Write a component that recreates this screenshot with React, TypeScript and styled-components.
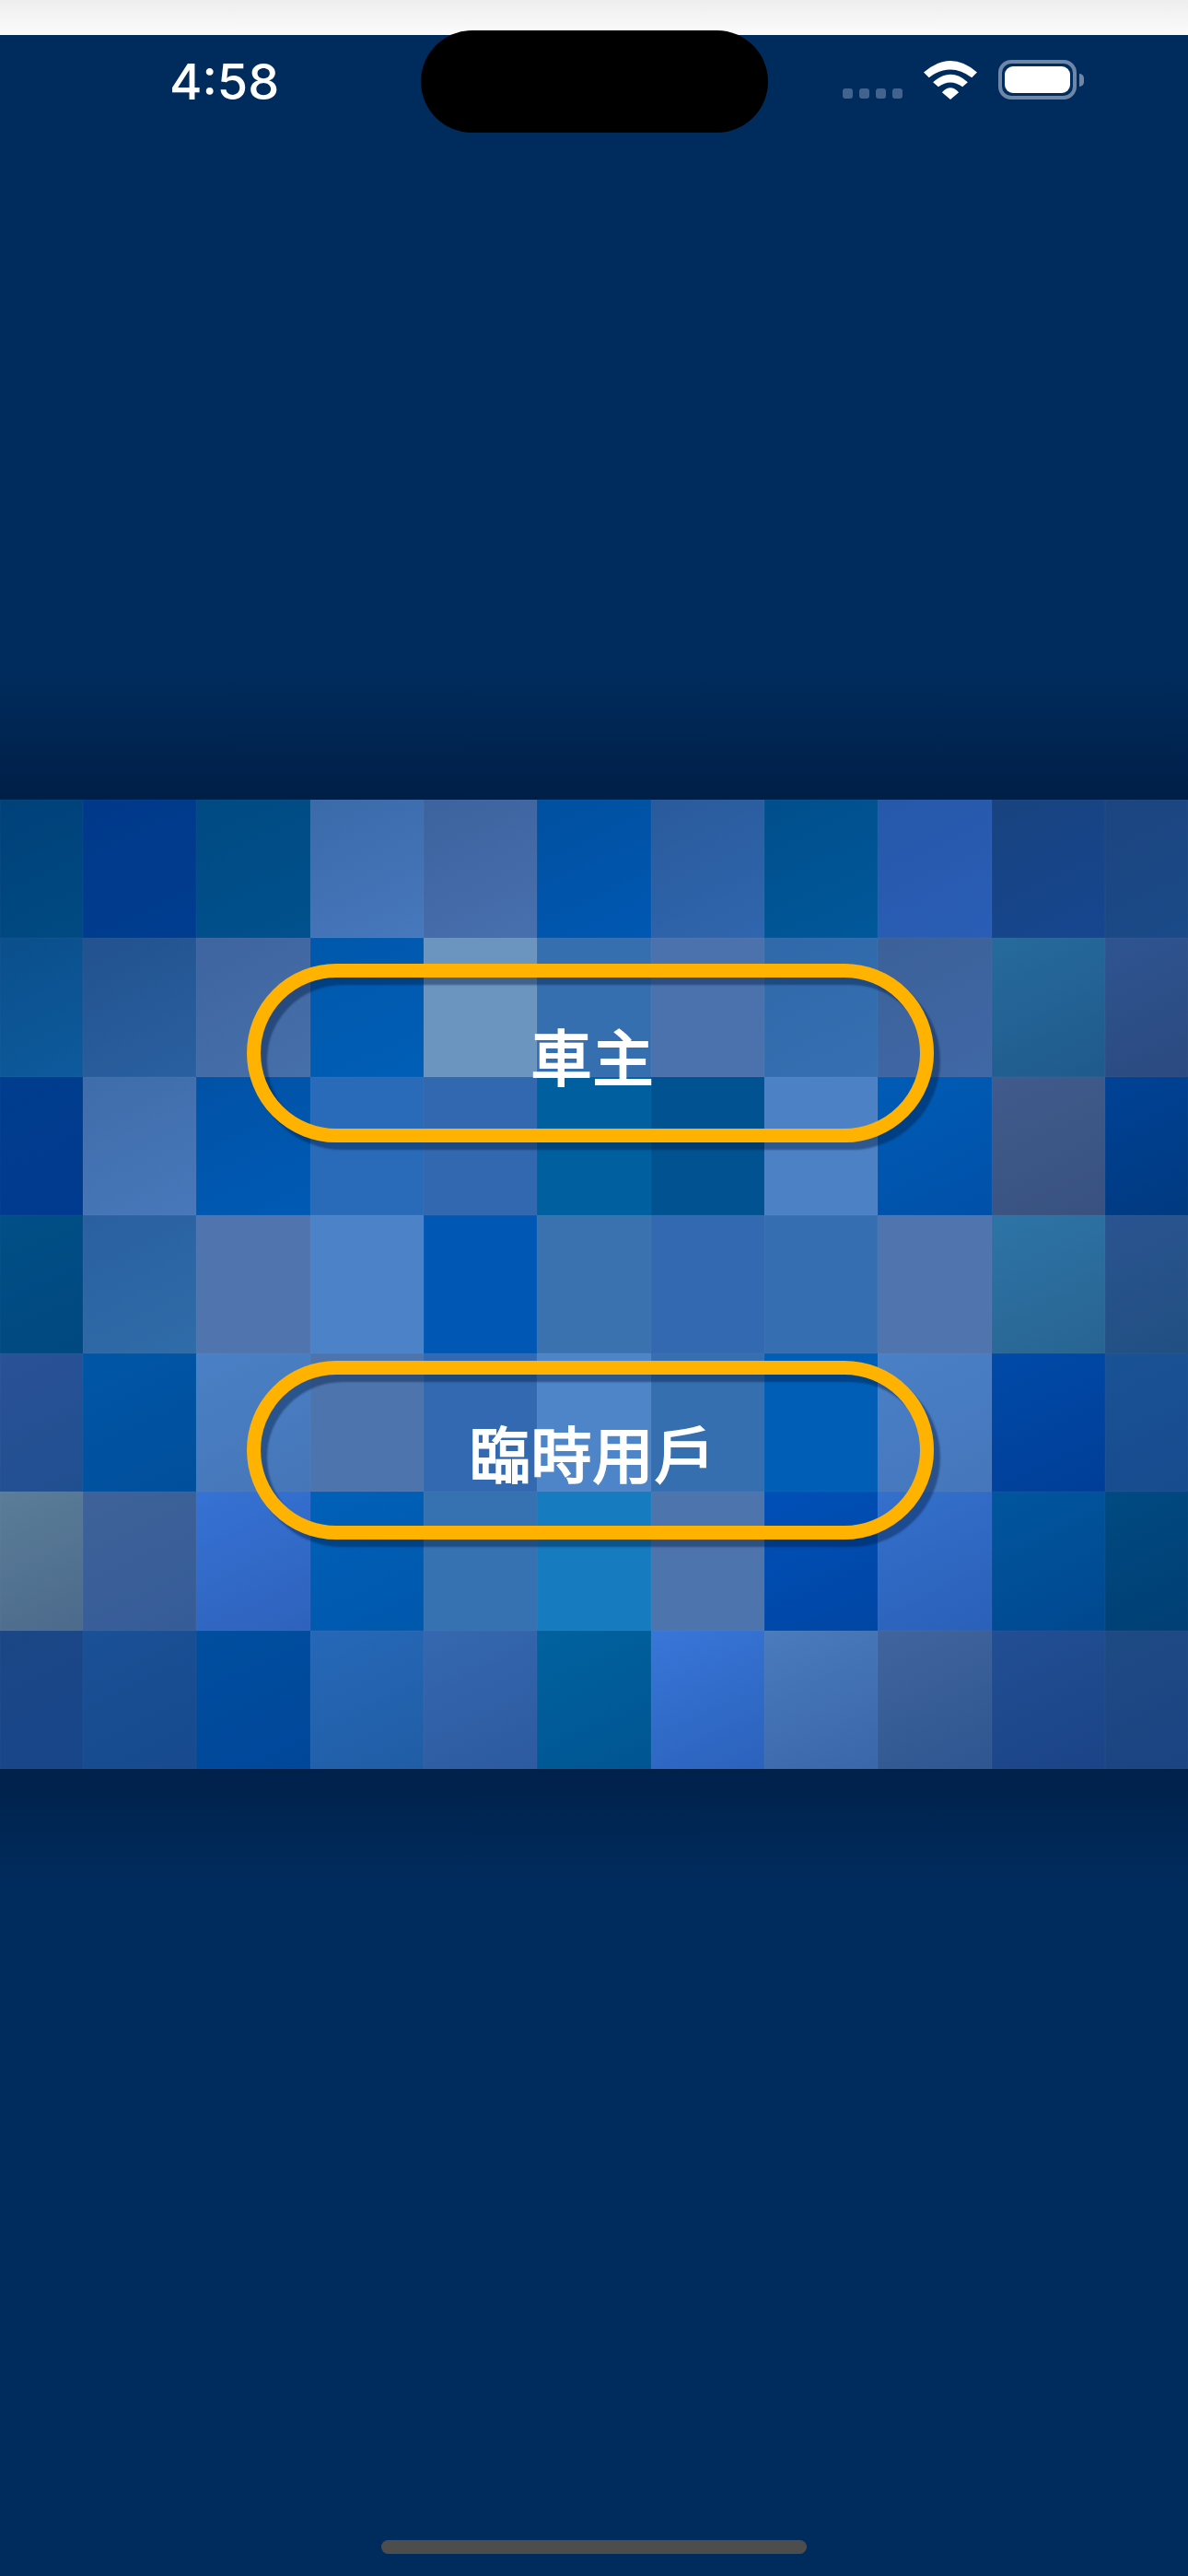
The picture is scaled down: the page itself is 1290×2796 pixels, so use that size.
import React from "react";
import styled, { createGlobalStyle } from "styled-components";

const GlobalStyle = createGlobalStyle`
  html, body {
    margin: 0;
    padding: 0;
    background: #002c5d;
  }
  * {
    box-sizing: border-box;
  }
`;

const Screen = styled.div`
  position: relative;
  width: 1290px;
  height: 2796px;
  display: flex;
  flex-direction: column;
  overflow: hidden;
  background: #002c5d;
  font-family: "Noto Sans CJK TC", "Noto Sans", sans-serif;
`;

const TopStrip = styled.div`
  height: 38px;
  flex: none;
  background: linear-gradient(180deg, #eeeeee 0%, #fbfbfb 100%);
`;

const Island = styled.div`
  position: absolute;
  top: 33px;
  left: 457px;
  width: 377px;
  height: 111px;
  border-radius: 56px;
  background: #000000;
`;

const HeaderBand = styled.div`
  height: 830px;
  flex: none;
  padding: 18px 113px 0 184px;
  background: linear-gradient(180deg, #002c5d 0%, #002c5d 83%, #001f47 100%);
`;

const StatusBar = styled.div`
  display: flex;
  align-items: flex-start;
  justify-content: space-between;
`;

const Time = styled.span`
  font-family: Inter, "Liberation Sans", sans-serif;
  font-size: 54px;
  font-weight: 550;
  line-height: 65px;
  color: #ffffff;
`;

const StatusIcons = styled.div`
  display: flex;
  align-items: flex-end;
  column-gap: 23px;
  margin-top: 9px;
`;

const SignalDots = styled.div`
  display: flex;
  column-gap: 7px;
  margin-bottom: 1px;
`;

const SignalDot = styled.span`
  width: 11px;
  height: 11px;
  border-radius: 3px;
  background: #41638e;
`;

const Battery = styled.div`
  display: flex;
  align-items: center;
  column-gap: 3px;
`;

const BatteryBody = styled.div`
  width: 85px;
  height: 43px;
  padding: 3px;
  border: 4px solid #6e87a8;
  border-radius: 14px;
`;

const BatteryFill = styled.div`
  width: 100%;
  height: 100%;
  border-radius: 9px;
  background: #ffffff;
`;

const BatteryCap = styled.div`
  width: 5px;
  height: 14px;
  border-radius: 0 5px 5px 0;
  background: #6e87a8;
`;

const Hero = styled.section`
  height: 1052px;
  flex: none;
  display: grid;
`;

const Mosaic = styled.div`
  grid-area: 1 / 1;
  display: grid;
  grid-template-columns: 90px repeat(9, 1fr) 90px;
  grid-template-rows: repeat(7, 1fr);
`;

const Cell = styled.div<{ $from: string; $to: string }>`
  background: linear-gradient(155deg, ${(p) => p.$from}, ${(p) => p.$to});
  box-shadow: inset 0 0 0 1px rgba(255, 255, 255, 0.02);
`;

const ButtonStack = styled.div`
  grid-area: 1 / 1;
  display: flex;
  flex-direction: column;
  row-gap: 237px;
  padding: 178px 0 0 268px;
`;

const RoleButton = styled.button`
  width: 746px;
  height: 194px;
  padding: 2px 0 0 5px;
  border: 15px solid #ffb200;
  border-radius: 97px;
  background: transparent;
  box-shadow: 7px 8px 2px rgba(0, 28, 70, 0.42),
    inset 7px 8px 2px rgba(0, 28, 70, 0.42);
  font-family: "Noto Sans CJK TC", sans-serif;
  font-size: 66px;
  font-weight: 400;
  line-height: 66px;
  letter-spacing: 1px;
  color: #ffffff;
  -webkit-text-stroke: 2.2px #ffffff;
`;

const FooterBand = styled.div`
  flex: 1;
  display: flex;
  align-items: flex-end;
  justify-content: center;
  padding-bottom: 24px;
  background: linear-gradient(180deg, #00214a 0, #002c5d 125px);
`;

const HomeIndicator = styled.div`
  width: 462px;
  height: 15px;
  border-radius: 8px;
  background: #4d4d4d;
`;

// top-left and bottom-right tone of each tile, row by row
const tiles = [
  "#00417a #004a82,#00398a #003d90,#004a82 #00518e,#3a6aa9 #4878bd,#3d639e #4870ae,#0050a0 #0058b2,#295a9c #3066ae,#004f8c #00589a,#2658aa #2a5eb6,#18437f #174690,#1c4580 #1a4a88",
  "#0b4f8c #0d5a9c,#22528f #2a60a0,#3f64a0 #4670aa,#0058ac #005eb6,#6b95bf #6b95bf,#366fb0 #366fb0,#4c72ae #4c72ae,#2f69aa #3670b2,#3c6199 #4068a6,#266a9c #205a8c,#2e5490 #2b4a80",
  "#003d8e #003a90,#3f6caa #4878ba,#0052a6 #005ab4,#296bb9 #296bb9,#3268af #3268af,#005f9f #005f9f,#005290 #005290,#4c82c5 #4c82c5,#005cb5 #0050a8,#405b8c #38517f,#004296 #003a80",
  "#004f86 #004880,#2a60a0 #2f6ca8,#4f74ae #4f74ae,#4c82c8 #4c82c8,#0058b4 #0058b4,#3a72b0 #3a72b0,#3369b0 #3369b0,#366fb1 #366fb1,#5074ae #5074ae,#2d74a6 #286492,#2a5490 #214f82",
  "#2a5296 #204f90,#0056a6 #004f9c,#4a80c6 #4576b8,#4e74ae #4e74ae,#3369b0 #3369b0,#4e84c8 #4e84c8,#356fb0 #356fb0,#005eb6 #005eb6,#4a80c6 #4576bc,#004aa8 #003e98,#1a5296 #174c8e",
  "#5b7d98 #4c6a8c,#3e6298 #365c98,#3672d4 #2e62bc,#0060b8 #0058ac,#3672b2 #3672b2,#167bbf #167bbf,#4e74ae #4e74ae,#0050b8 #0046a4,#3470cc #2a60b8,#00569e #004890,#004a82 #003f74",
  "#1c4686 #18468a,#1a5096 #174a8e,#004e9f #00479a,#2668b8 #205da5,#3568b0 #2d5aa0,#00629f #005592,#3876d8 #2b62bc,#4a7bbb #3a66aa,#40649e #2f5690,#224e94 #1a4486,#1e4a84 #1b4482",
].flatMap((row) => row.split(","));

const WifiIcon: React.FC = () => (
  <svg width="58" height="42" viewBox="0 0 57.4 41.6" fill="#ffffff">
    <path d="M0 12.3Q28.7 -12.3 57.4 12.3L51.7 18Q28.7 0.6 5.7 18Z" />
    <path d="M10 23Q28.7 6.4 47.4 23L41.7 28Q28.7 18.6 15.7 28Z" />
    <path d="M19.7 34Q28.7 24 37.7 34L28.7 41.6Z" />
  </svg>
);

const App: React.FC = () => {
  return (
    <Screen>
      <GlobalStyle />
      <TopStrip />
      <Island />
      <HeaderBand>
        <StatusBar>
          <Time>4:58</Time>
          <StatusIcons>
            <SignalDots>
              {[0, 1, 2, 3].map((dot) => (
                <SignalDot key={dot} />
              ))}
            </SignalDots>
            <WifiIcon />
            <Battery>
              <BatteryBody>
                <BatteryFill />
              </BatteryBody>
              <BatteryCap />
            </Battery>
          </StatusIcons>
        </StatusBar>
      </HeaderBand>
      <Hero>
        <Mosaic>
          {tiles.map((tile, index) => {
            const [from, to] = tile.split(" ");
            return <Cell key={index} $from={from} $to={to} />;
          })}
        </Mosaic>
        <ButtonStack>
          <RoleButton>車主</RoleButton>
          <RoleButton>臨時用戶</RoleButton>
        </ButtonStack>
      </Hero>
      <FooterBand>
        <HomeIndicator />
      </FooterBand>
    </Screen>
  );
};

export default App;
